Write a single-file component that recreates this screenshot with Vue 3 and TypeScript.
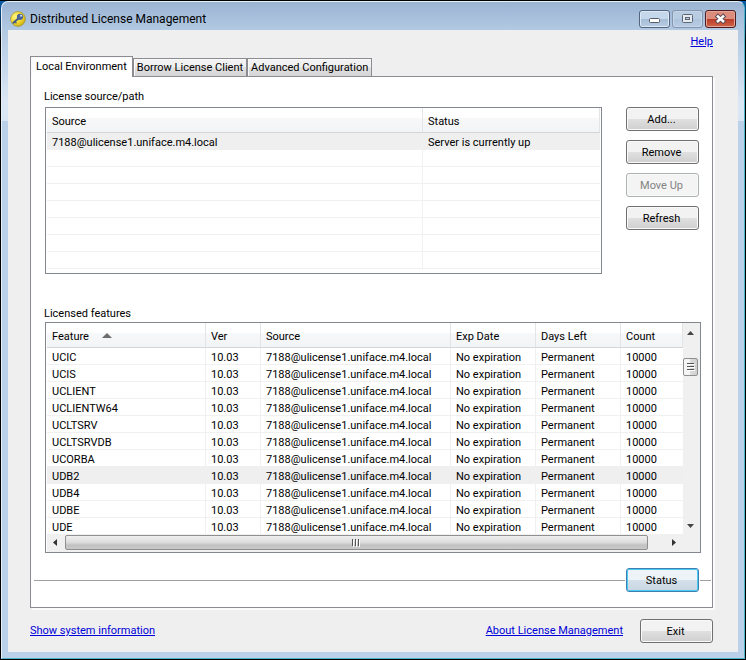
<script setup lang="ts">
import { ref } from 'vue'

interface Feature {
  name: string
  ver: string
  source: string
  exp: string
  days: string
  count: number
}

const tabs: string[] = ['Local Environment', 'Borrow License Client', 'Advanced Configuration']
const activeTab = ref<string>(tabs[0])

const server = '7188@ulicense1.uniface.m4.local'
const blankRows = 7

const names: string[] = [
  'UCIC', 'UCIS', 'UCLIENT', 'UCLIENTW64', 'UCLTSRV', 'UCLTSRVDB',
  'UCORBA', 'UDB2', 'UDB4', 'UDBE', 'UDE',
]
const features: Feature[] = names.map((name) => ({
  name,
  ver: '10.03',
  source: server,
  exp: 'No expiration',
  days: 'Permanent',
  count: 10000,
}))
const selected = ref<string>('UDB2')
</script>

<template>
  <div class="desktop">
    <div class="window">
      <header class="titlebar">
        <svg class="app-icon" width="16" height="16" viewBox="0 0 16 16" aria-hidden="true">
          <defs>
            <radialGradient id="coin" cx="0.35" cy="0.35" r="0.75">
              <stop offset="0" stop-color="#fff68a" />
              <stop offset="0.55" stop-color="#f0d92a" />
              <stop offset="1" stop-color="#c2a516" />
            </radialGradient>
          </defs>
          <circle cx="8" cy="8" r="7.4" fill="url(#coin)" stroke="#a39348" stroke-width="0.8" />
          <path d="M3.4 11.8 L8.6 7.2" stroke="#42598a" stroke-width="2" stroke-linecap="round" />
          <path d="M5 10.6l1.4 1.6" stroke="#42598a" stroke-width="1.3" />
          <circle cx="10" cy="5.8" r="3.1" fill="#4a649a" />
          <circle cx="11" cy="4.8" r="1" fill="#dfe6f0" />
        </svg>
        <h1 class="title">Distributed License Management</h1>
        <div class="caption-buttons">
          <button class="cap" type="button" aria-label="Minimize">
            <svg width="13" height="14" viewBox="0 0 13 14" aria-hidden="true">
              <rect x="1.5" y="6.5" width="10" height="4" rx="1" fill="#fff" stroke="#565b66" />
            </svg>
          </button>
          <button class="cap dim" type="button" aria-label="Maximize">
            <svg width="13" height="14" viewBox="0 0 13 14" aria-hidden="true">
              <rect x="1.5" y="2.5" width="10" height="8" rx="1" fill="#e6ebf1" stroke="#5d6472" />
              <rect x="4.5" y="5.5" width="4" height="2" fill="#c3cfdd" stroke="#5d6472" />
            </svg>
          </button>
          <button class="cap close" type="button" aria-label="Close">
            <svg width="13" height="14" viewBox="0 0 13 14" aria-hidden="true">
              <path d="M2.2 3l8.6 7.6M10.8 3L2.2 10.6" stroke="#5f4a52" stroke-width="4.4" />
              <path d="M3 3.6l7 6.4M10 3.6L3 10" stroke="#fff" stroke-width="2.6" />
            </svg>
          </button>
        </div>
      </header>

      <main class="client">
        <div class="help-row"><a href="#help">Help</a></div>

        <div class="tabs" role="tablist">
          <button
            v-for="tab in tabs"
            :key="tab"
            class="tab"
            :class="{ active: tab === activeTab }"
            type="button"
            role="tab"
            :aria-selected="tab === activeTab"
            @click="activeTab = tab"
          >{{ tab }}</button>
        </div>

        <section class="panel" role="tabpanel">
          <h2 class="label">License source/path</h2>
          <div class="source-area">
            <div class="list sources">
              <table>
                <colgroup><col class="c-path"><col></colgroup>
                <thead><tr><th>Source</th><th>Status</th></tr></thead>
                <tbody>
                  <tr class="selected"><td>{{ server }}</td><td>Server is currently up</td></tr>
                  <tr v-for="n in blankRows" :key="n"><td></td><td></td></tr>
                </tbody>
              </table>
            </div>
            <div class="actions">
              <button class="btn" type="button">Add...</button>
              <button class="btn" type="button">Remove</button>
              <button class="btn" type="button" disabled>Move Up</button>
              <button class="btn" type="button">Refresh</button>
            </div>
          </div>

          <h2 class="label second">Licensed features</h2>
          <div class="list features">
            <table>
              <colgroup>
                <col class="c-name"><col class="c-ver"><col><col class="c-exp"><col class="c-exp"><col class="c-count">
              </colgroup>
              <thead>
                <tr>
                  <th>
                    Feature
                    <svg class="sort" width="10" height="5" viewBox="0 0 10 5" aria-hidden="true">
                      <path d="M0 5L5 0l5 5z" fill="#6d6d6d" />
                    </svg>
                  </th>
                  <th>Ver</th><th>Source</th><th>Exp Date</th><th>Days Left</th><th>Count</th>
                </tr>
              </thead>
              <tbody>
                <tr
                  v-for="f in features"
                  :key="f.name"
                  :class="{ selected: f.name === selected }"
                  @click="selected = f.name"
                >
                  <td>{{ f.name }}</td><td>{{ f.ver }}</td><td>{{ f.source }}</td>
                  <td>{{ f.exp }}</td><td>{{ f.days }}</td><td>{{ f.count }}</td>
                </tr>
              </tbody>
            </table>
            <div class="vbar">
              <svg width="7" height="4" viewBox="0 0 7 4" aria-hidden="true"><path d="M0 4L3.5 0 7 4z" fill="#444" /></svg>
              <div class="thumb">
                <svg width="8" height="9" viewBox="0 0 8 9" aria-hidden="true">
                  <path d="M0 .5h7M0 3.5h7M0 6.5h7" stroke="#555" />
                  <path d="M1 1.5h7M1 4.5h7M1 7.5h7" stroke="#fff" />
                </svg>
              </div>
              <svg class="down" width="7" height="4" viewBox="0 0 7 4" aria-hidden="true"><path d="M0 0L3.5 4 7 0z" fill="#444" /></svg>
            </div>
            <div class="hbar">
              <svg width="4" height="7" viewBox="0 0 4 7" aria-hidden="true"><path d="M4 0L0 3.5 4 7z" fill="#333" /></svg>
              <div class="thumb">
                <svg width="9" height="8" viewBox="0 0 9 8" aria-hidden="true">
                  <path d="M.5 0v7M3.5 0v7M6.5 0v7" stroke="#555" />
                  <path d="M1.5 1v7M4.5 1v7M7.5 1v7" stroke="#fff" />
                </svg>
              </div>
              <svg width="4" height="7" viewBox="0 0 4 7" aria-hidden="true"><path d="M0 0l4 3.5L0 7z" fill="#333" /></svg>
            </div>
            <div class="corner"></div>
          </div>

          <div class="status-row">
            <button class="btn default" type="button">Status</button>
          </div>
        </section>

        <footer class="footer">
          <a href="#system">Show system information</a>
          <a class="about" href="#about">About License Management</a>
          <button class="btn" type="button">Exit</button>
        </footer>
      </main>
    </div>
  </div>
</template>

<style>
body {
  margin: 0;
  background: #000;
}
</style>

<style scoped>
* {
  box-sizing: border-box;
}

.desktop {
  min-height: 100vh;
  padding: 1px;
  display: flex;
  background: linear-gradient(#000 1px, #0b5ea8 1px, #06233f 30px, #000 40px);
  font: 11px/14px Roboto, 'DejaVu Sans Condensed', sans-serif;
  color: #000;
}

.window {
  flex: 1;
  display: flex;
  flex-direction: column;
  padding: 0 6px 6px;
  border: 1px solid #4fb4c6;
  border-top-color: #e6eef7;
  border-left-color: #e6eef7;
  border-radius: 7px 7px 0 0;
  background: linear-gradient(#9bb4d2 0, #b2c9e3 28px, #dbe7f4 100px, #d8e6f4 119px, #bad1e9 119px);
}

.titlebar {
  display: flex;
  height: 28px;
  padding: 0 2px;
  gap: 4px;
  align-items: center;
}

.title {
  flex: 1;
  margin: 5px 0 0;
  font: 12px/16px Roboto, 'Noto Sans', sans-serif;
}

.app-icon {
  margin-top: 5px;
}

.caption-buttons {
  display: flex;
  gap: 2px;
  margin-top: 6px;
}

.cap {
  display: flex;
  align-items: center;
  justify-content: center;
  width: 31px;
  height: 18px;
  padding: 0;
  border: 1px solid #53647c;
  border-radius: 3px;
  box-shadow: inset 0 0 0 1px #dce8f5;
  background: linear-gradient(#c5d7ea 50%, #a5bcd6 50%, #b8cde4);
}

.cap.dim {
  border-color: #8496ae;
  box-shadow: inset 0 0 0 1px #c6d6e8;
  background: linear-gradient(#b8cce2 50%, #adc3dd 50%, #b8cde4);
}

.cap.close {
  border-color: #4f1a1e;
  box-shadow: inset 0 0 0 1px #e3a799;
  background: linear-gradient(#dc8c7c 50%, #b93a25 50%, #d0654c);
}

.client {
  flex: 1;
  display: flex;
  flex-direction: column;
  padding: 5px 25px 9px 22px;
  background: #efefef;
}

a {
  color: #0000d8;
  text-decoration: underline;
}

.help-row {
  text-align: right;
  height: 21px;
}

.tabs {
  display: flex;
  align-items: flex-end;
}

.tab {
  height: 18px;
  padding: 1px 3px 0;
  border: 1px solid #8a8c91;
  border-bottom: 0;
  box-shadow: inset 1px 1px 0 #fafafa;
  background: linear-gradient(#f1f1f1 50%, #e2e2e2 50%, #d4d4d4);
  font: inherit;
  color: inherit;
}

.tab.active {
  height: 21px;
  margin-bottom: -1px;
  padding: 0 5px;
  background: #fff;
  z-index: 1;
}

.panel {
  flex: 1;
  display: flex;
  flex-direction: column;
  padding: 13px 11px 15px 14px;
  border: 1px solid #8a8c91;
  box-shadow: 2px 2px 0 #fbfbfb;
  background: #fff;
}

.label {
  margin: 0 0 3px -1px;
  font: inherit;
}

.label.second {
  margin-top: 33px;
  margin-bottom: 1px;
}

.source-area {
  display: flex;
  gap: 24px;
  padding-right: 2px;
}

.list {
  border: 1px solid #828790;
  background: #fff;
}

.sources {
  flex: 1;
  padding: 0 1px 4px;
}

table {
  width: 100%;
  table-layout: fixed;
  border-collapse: separate;
  border-spacing: 0;
}

th,
td {
  overflow: hidden;
  white-space: nowrap;
  text-align: left;
  font-weight: normal;
}

th {
  height: 25px;
  padding: 3px 5px 0;
  border-right: 1px solid #e3e4e6;
  border-bottom: 1px solid #d5d5d5;
  background: linear-gradient(#fff 40%, #f7f8f9 40%, #f3f4f5);
}

td {
  height: 17px;
  padding: 4px 5px 0;
  border-right: 1px solid #f0f0f0;
  border-bottom: 1px solid #f0f0f0;
  line-height: 12px;
}

td:last-child {
  border-right: 0;
}

.selected td {
  background: #efefef;
}

.c-path {
  width: 376px;
}

.c-name {
  width: 159px;
}

.c-ver {
  width: 55px;
}

.c-exp {
  width: 85px;
}

.c-count {
  width: 62px;
}

.sort {
  margin: 0 0 2px 10px;
}

.actions {
  display: flex;
  flex-direction: column;
  gap: 9px;
}

.btn {
  width: 73px;
  height: 24px;
  padding: 1px 2px 0 0;
  border: 1px solid #707070;
  border-radius: 3px;
  box-shadow: inset 0 0 0 1px #fafafa;
  background: linear-gradient(#f2f2f2 50%, #e0e0e0 50%, #cfcfcf);
  font: inherit;
  color: inherit;
}

.btn:disabled {
  border-color: #adb2b5;
  background: #f4f4f4;
  color: #838383;
}

.btn.default {
  border-color: #3c7fb1;
  box-shadow: inset 0 0 0 1px #4ccaf3;
  background: linear-gradient(#eef3f7 50%, #d4e0ea 50%, #c8d7e4);
}

.features {
  display: grid;
  grid-template-columns: 1fr 17px;
  grid-template-rows: auto 17px;
  padding-left: 1px;
}

.vbar {
  display: flex;
  flex-direction: column;
  align-items: center;
  padding: 8px 2px 7px 0;
  background: #f0f0f0;
}

.vbar .thumb {
  width: 15px;
  height: 18px;
  margin-top: 23px;
  background: linear-gradient(90deg, #f5f5f5 50%, #dcdcdc 50%, #d0d0d0);
}

.thumb {
  display: flex;
  align-items: center;
  justify-content: center;
  border: 1px solid #8f8f8f;
  border-radius: 2px;
}

.down {
  margin-top: auto;
}

.hbar {
  display: flex;
  align-items: center;
  gap: 8px;
  padding: 0 7px 2px 6px;
  background: #f0f0f0;
}

.hbar .thumb {
  flex: 1;
  height: 15px;
  margin-right: 16px;
  background: linear-gradient(#f0f0f0, #dcdcdc 50%, #c2c2c2 70%, #c8c8c8);
}

.corner {
  background: #f0f0f0;
}

.status-row {
  display: flex;
  align-items: center;
  gap: 1px;
  margin: auto -10px 0 -11px;
}

.status-row::before,
.status-row::after {
  content: '';
  height: 1px;
  background: #a0a0a0;
}

.status-row::before {
  flex: 1;
}

.status-row::after {
  width: 11px;
}

.footer {
  display: flex;
  align-items: center;
  margin-top: 11px;
}

.about {
  margin-left: auto;
  margin-right: 17px;
}
</style>
